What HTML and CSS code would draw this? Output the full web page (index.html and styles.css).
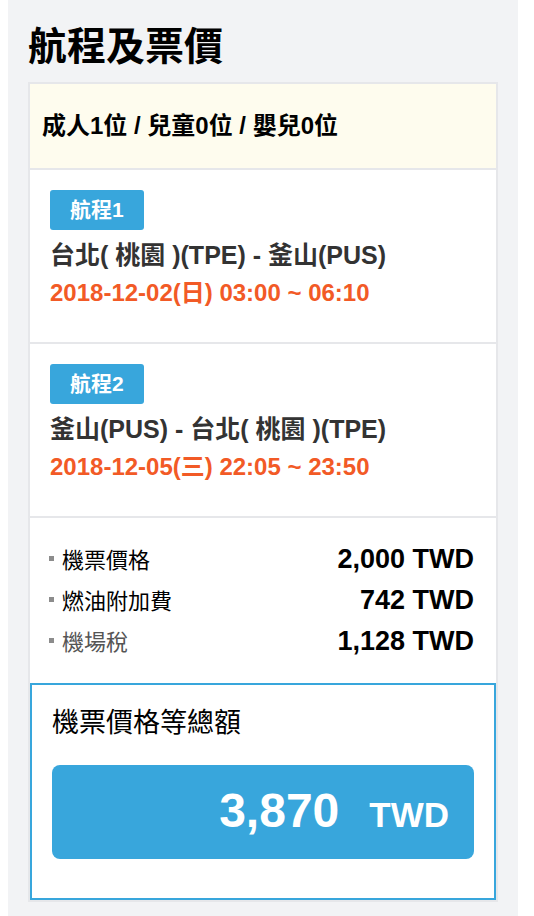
FILE: index.html
```html
<!DOCTYPE html>
<html lang="zh-Hant">

<head>
  <meta charset="UTF-8" />
  <meta name="viewport" content="width=device-width, initial-scale=1.0" />
  <title>航程及票價</title>
  <link rel="stylesheet" href="styles.css">
</head>

<body>
  <div class="panel">
    <h1 class="panel-title">航程及票價</h1>

    <div class="trip-card">
      <div class="passengers">成人1位 / 兒童0位 / 嬰兒0位</div>

      <div class="leg">
        <span class="leg-badge">航程1</span>
        <div class="leg-route">台北( 桃園 )(TPE) - 釜山(PUS)</div>
        <div class="leg-time">2018-12-02(日) 03:00 ~ 06:10</div>
      </div>

      <div class="leg">
        <span class="leg-badge">航程2</span>
        <div class="leg-route">釜山(PUS) - 台北( 桃園 )(TPE)</div>
        <div class="leg-time">2018-12-05(三) 22:05 ~ 23:50</div>
      </div>

      <ul class="fees">
        <li><span class="fee-name">機票價格</span><span class="fee-value">2,000 TWD</span></li>
        <li><span class="fee-name">燃油附加費</span><span class="fee-value">742 TWD</span></li>
        <li class="muted"><span class="fee-name">機場稅</span><span class="fee-value">1,128 TWD</span></li>
      </ul>

      <div class="total">
        <div class="total-label">機票價格等總額</div>
        <div class="total-box">
          <span class="total-amount">3,870</span>
          <span class="total-currency">TWD</span>
        </div>
      </div>
    </div>
  </div>
</body>

</html>
```

FILE: styles.css
```css
:root {
  --panel-bg: #f2f3f5;
  --line: #e6e7ea;
  --blue: #38a6dc;
  --orange: #f25a26;
  --text: #333333;
}

body {
  margin: 0;
  background: #ffffff;
  font-family: "Liberation Sans", "Noto Sans CJK TC", sans-serif;
  color: #000;
}

.panel {
  margin-left: 8px;
  width: 510px;
  min-height: 916px;
  box-sizing: border-box;
  padding: 0 20px;
  background: var(--panel-bg);
}

.panel-title {
  margin: 0;
  padding: 22px 0 10px;
  font-size: 39px;
  line-height: 50px;
  font-weight: 700;
}

.trip-card {
  background: #ffffff;
  border: 2px solid var(--line);
}

.passengers {
  height: 84px;
  padding: 0 12px;
  background: #fefcee;
  font-size: 24px;
  font-weight: 700;
  line-height: 84px;
  white-space: nowrap;
}

.leg {
  height: 174px;
  box-sizing: border-box;
  padding: 20px 20px 0;
  border-top: 2px solid var(--line);
}

.leg-badge {
  display: inline-block;
  height: 40px;
  padding: 0 20px;
  border-radius: 3px;
  background: var(--blue);
  color: #ffffff;
  font-size: 21px;
  font-weight: 700;
  line-height: 40px;
}

.leg-route {
  margin-top: 7px;
  color: var(--text);
  font-size: 25px;
  font-weight: 700;
  line-height: 37px;
  white-space: nowrap;
}

.leg-time {
  color: var(--orange);
  font-size: 24px;
  font-weight: 700;
  line-height: 38px;
  white-space: nowrap;
}

.fees {
  list-style: none;
  margin: 0;
  padding: 21px 22px 21px 19px;
  border-top: 2px solid var(--line);
}

.fees li {
  display: flex;
  justify-content: space-between;
  align-items: baseline;
  height: 41px;
  line-height: 41px;
}

.fee-name {
  font-size: 22px;
}

.fee-name::before {
  content: "";
  display: inline-block;
  width: 5px;
  height: 5px;
  margin-right: 8px;
  vertical-align: 0.3em;
  background: #8c8c8c;
}

.fees li.muted .fee-name {
  color: #555555;
}

.fee-value {
  font-size: 27px;
  font-weight: 700;
}

.total {
  padding: 17px 20px 39px;
  border: 2px solid var(--blue);
}

.total-label {
  font-size: 27px;
  line-height: 42px;
}

.total-box {
  display: flex;
  justify-content: flex-end;
  align-items: baseline;
  gap: 30px;
  height: 94px;
  box-sizing: border-box;
  margin-top: 21px;
  padding: 16px 25px 0 0;
  border-radius: 8px;
  background: var(--blue);
  color: #ffffff;
  font-weight: 700;
}

.total-amount {
  font-size: 48px;
  line-height: 60px;
}

.total-currency {
  font-size: 35px;
}
```
